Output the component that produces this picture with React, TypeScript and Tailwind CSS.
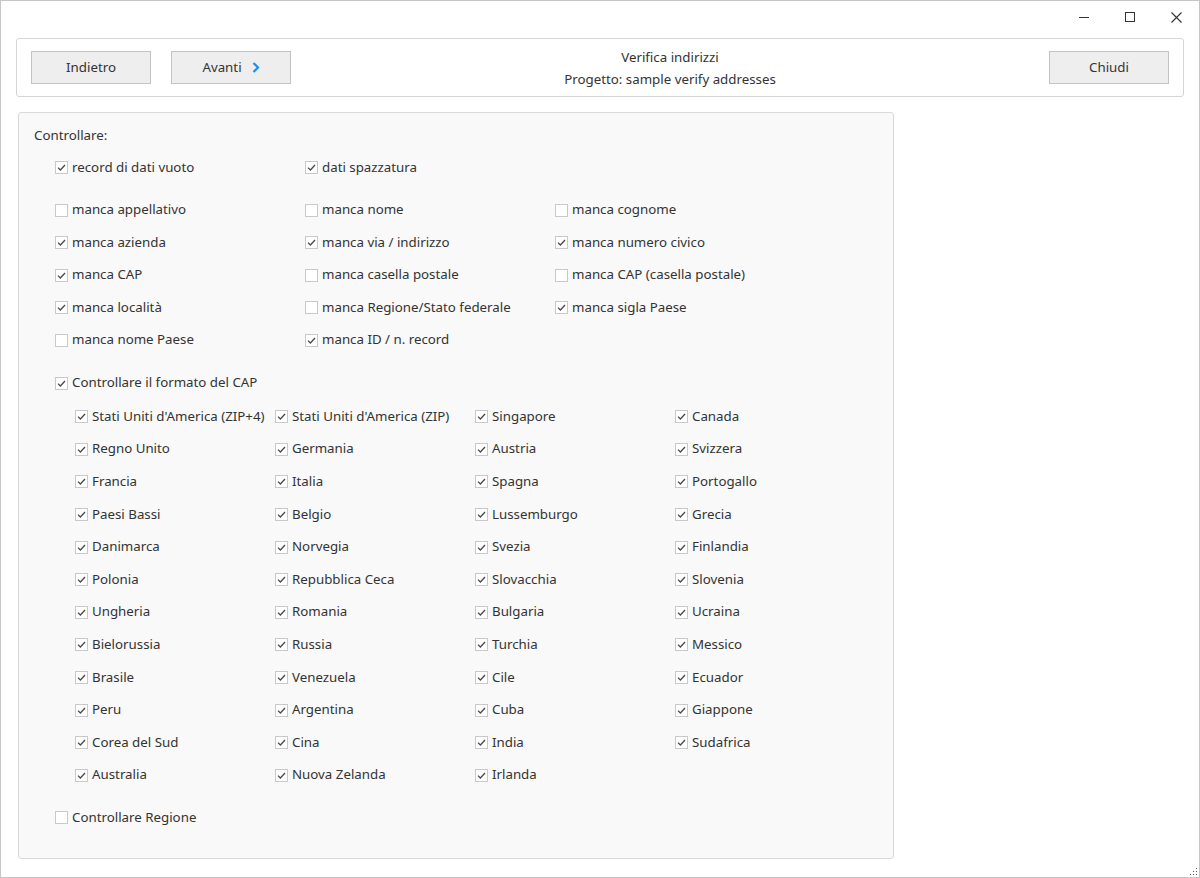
import { ReactNode } from "react"

const font = { fontFamily: '"Segoe UI", "Noto Sans", "Open Sans", sans-serif' }

// first block: general checks
const basicChecks: [string, boolean][][] = [
  [
    ["manca appellativo", false],
    ["manca nome", false],
    ["manca cognome", false],
  ],
  [
    ["manca azienda", true],
    ["manca via / indirizzo", true],
    ["manca numero civico", true],
  ],
  [
    ["manca CAP", true],
    ["manca casella postale", false],
    ["manca CAP (casella postale)", false],
  ],
  [
    ["manca località", true],
    ["manca Regione/Stato federale", false],
    ["manca sigla Paese", true],
  ],
  [
    ["manca nome Paese", false],
    ["manca ID / n. record", true],
  ],
]

const countries = [
  "Stati Uniti d'America (ZIP+4)", "Stati Uniti d'America (ZIP)", "Singapore", "Canada",
  "Regno Unito", "Germania", "Austria", "Svizzera",
  "Francia", "Italia", "Spagna", "Portogallo",
  "Paesi Bassi", "Belgio", "Lussemburgo", "Grecia",
  "Danimarca", "Norvegia", "Svezia", "Finlandia",
  "Polonia", "Repubblica Ceca", "Slovacchia", "Slovenia",
  "Ungheria", "Romania", "Bulgaria", "Ucraina",
  "Bielorussia", "Russia", "Turchia", "Messico",
  "Brasile", "Venezuela", "Cile", "Ecuador",
  "Peru", "Argentina", "Cuba", "Giappone",
  "Corea del Sud", "Cina", "India", "Sudafrica",
  "Australia", "Nuova Zelanda", "Irlanda",
]

function Check({ label, checked }: { label: string; checked: boolean }) {
  return (
    <label className="flex items-center gap-[4px] whitespace-nowrap">
      <span className="w-[13px] h-[13px] shrink-0 border border-[#c9c9c9] bg-white flex items-center justify-center">
        {checked && (
          <svg width="11" height="11" viewBox="0 0 11 11">
            <path d="M2 5.6 L4.4 8 L9 3" fill="none" stroke="#4a4a4a" strokeWidth="1.3" />
          </svg>
        )}
      </span>
      <span>{label}</span>
    </label>
  )
}

function Button({ children }: { children: ReactNode }) {
  return (
    <button className="w-[120px] h-[33px] bg-[#eeeeee] border border-[#c3c3c3] text-[#333] text-[13.3px] flex items-center justify-center gap-[10px]">
      {children}
    </button>
  )
}

export default function App() {
  return (
    <div className="w-[1200px] h-[878px] bg-white border border-[#c6c6c6] relative text-[13.3px] text-[#333]" style={font}>
      {/* title bar */}
      <div className="h-[37px] flex justify-end">
        <div className="w-[46px] h-[32px] flex items-center justify-center">
          <div className="w-[10px] h-px bg-[#333]" />
        </div>
        <div className="w-[46px] h-[32px] flex items-center justify-center">
          <div className="w-[10px] h-[10px] border border-[#333]" />
        </div>
        <div className="w-[46px] h-[32px] flex items-center justify-center">
          <svg width="11" height="11" viewBox="0 0 11 11">
            <path d="M0.5 0.5 L10.5 10.5 M10.5 0.5 L0.5 10.5" stroke="#333" strokeWidth="1.1" />
          </svg>
        </div>
      </div>

      {/* header */}
      <div className="mx-[15px] h-[59px] border border-[#d5d5d5] rounded-[3px] bg-white flex items-start pt-[12px] px-[14px]">
        <Button>Indietro</Button>
        <div className="w-[20px]" />
        <Button>
          <span>Avanti</span>
          <svg width="8" height="11" viewBox="0 0 8 11">
            <path d="M1.5 1 L6 5.5 L1.5 10" fill="none" stroke="#1a8cf0" strokeWidth="2.2" />
          </svg>
        </Button>
        <div className="flex-1 text-center leading-[22px] -mt-[5px]">
          <div>Verifica indirizzi</div>
          <div>Progetto: sample verify addresses</div>
        </div>
        <Button>Chiudi</Button>
      </div>

      {/* options */}
      <div className="ml-[17px] mt-[15px] w-[876px] h-[747px] bg-[#f9f9f9] border border-[#dadada] rounded-[3px] px-[15px] pt-[11px]">
        <div className="h-[22px] leading-[22px]">Controllare:</div>
        <div className="pl-[21px]">
          <div className="mt-[5.5px] h-[32.5px] grid grid-cols-[250px_250px_250px] items-center">
            <Check label="record di dati vuoto" checked />
            <Check label="dati spazzatura" checked />
          </div>
          <div className="mt-[10px]">
            {basicChecks.map((row, i) => (
              <div key={i} className="h-[32.5px] grid grid-cols-[250px_250px_250px] items-center">
                {row.map(([label, checked]) => (
                  <Check key={label} label={label} checked={checked} />
                ))}
              </div>
            ))}
          </div>
          <div className="mt-[10.5px] h-[32.5px] flex items-center">
            <Check label="Controllare il formato del CAP" checked />
          </div>
          <div className="mt-[1px] pl-[20px] grid grid-cols-[200px_200px_200px_200px] auto-rows-[32.6px] items-center">
            {countries.map((c) => (
              <Check key={c} label={c} checked />
            ))}
          </div>
          <div className="mt-[10px] h-[32.5px] flex items-center">
            <Check label="Controllare Regione" checked={false} />
          </div>
        </div>
      </div>

      {/* resize grip */}
      <svg className="absolute right-[1px] bottom-[1px]" width="9" height="9" viewBox="0 0 9 9">
        {[
          [7, 1], [7, 4], [4, 4], [7, 7], [4, 7], [1, 7],
        ].map(([x, y]) => (
          <rect key={`${x}-${y}`} x={x} y={y} width="1" height="1" fill="#555" />
        ))}
      </svg>
    </div>
  )
}
